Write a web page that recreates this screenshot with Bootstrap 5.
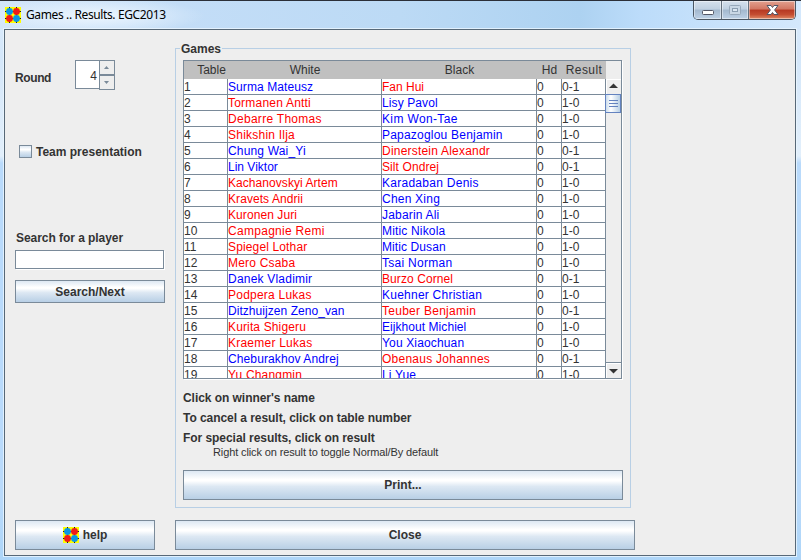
<!DOCTYPE html>
<html lang="en">
<head>
<meta charset="utf-8">
<title>Games .. Results. EGC2013</title>
<link rel="stylesheet" href="https://cdn.jsdelivr.net/npm/bootstrap@5.3.0/dist/css/bootstrap.min.css">
<style>
body{width:801px;height:560px;overflow:hidden;font:12px/16px "Liberation Sans",Arial,sans-serif;color:#333}
.win{width:801px;height:560px;padding:0 5px 4px 4px;border-top:1px solid #2b2f38;background:linear-gradient(#dcecfc 0,#d4e7fa 55px,#e2effb 155px,#b9dafb 162px,#b9dafb 500px,#add5f8 100%)}
.titlebar{height:28px;margin:0 -5px 0 -4px;padding-left:5px;background:radial-gradient(ellipse 110px 18px at 95px 15px,rgba(240,248,255,.9),rgba(240,248,255,0)),linear-gradient(90deg,#d3e6fa 0,#c3ddf7 180px,#bcdaf5 400px,#add2f1 580px,#bcdcfa 640px,#d4e8fc 801px)}
.caption{font:12px/16px "Noto Sans","Open Sans",sans-serif;letter-spacing:-.38px;color:#000;margin:6px 0 0 5px;white-space:nowrap}
.sys{height:19px;width:103px;margin-right:5px;border:1px solid #4b5663;border-top:0;border-radius:0 0 5px 5px;overflow:hidden}
.sys span{border-right:1px solid #65717e;background:linear-gradient(#d5e0ec 0,#c0d0e1 45%,#a3b8ce 50%,#bed1e6 100%);box-shadow:inset 0 0 0 1px rgba(255,255,255,.45)}
.sys .quit{border:0;background:linear-gradient(#e3a08f 0,#d27662 45%,#b63822 50%,#c44d31 75%,#e08b67 100%)}
.pane{height:527px;width:792px;border:1px solid #576877;background:#eee;box-shadow:0 0 0 1px rgba(235,246,255,.8)}
.side{width:170px;padding-left:10px;height:478px}
.spin{width:40px;height:30px;margin-left:24px}
.spin-val{width:25px;height:29px;border:1px solid #7a8a99;border-right:0;background:#fff;font-size:12px;padding:2px 2px 0 0}
.spin-btn{width:16px;height:15px;border:1px solid #7a8a99;background:#eee}
.tick{width:13px;height:13px;border:1px solid #7a8a99;margin-top:-1px}
.tick,.steel{background:linear-gradient(#dde8f3 0,#fff 30%,#fff 35%,#dde8f3 55%,#b8cfe5 100%)}
.steel{border:1px solid #7a8a99;border-radius:0;color:#333;font:bold 12px/16px "Liberation Sans",Arial,sans-serif;padding:0}
.steel:hover{color:#333;border-color:#7a8a99}
.field{width:149px;height:19px;border:1px solid #7a8a99;background:#fff;box-shadow:1px 1px 0 #fff}
.group{width:456px;height:460px;margin:18px 0 0;border:1px solid #b8cfe5;padding:0 7px}
.group-title{height:16px;margin:-8px 0 0 -3px;padding:0 1px;background:#eee;width:max-content;font-weight:bold}
.grid-box{width:439px;height:319px;margin-top:3px;border:1px solid #7a8a99;box-shadow:1px 1px 0 #fff;overflow:hidden}
.line{display:grid;grid-template-columns:44px 154px 155px 25px 44px;width:422px}
.heads{background:silver;height:18px;text-align:center;line-height:19px}
.line.item{height:16px;background:#fff}
.item span{border-right:1px solid #7a8a99;border-bottom:1px solid #7a8a99;line-height:16px;height:16px;white-space:nowrap}
.item .w{color:#00f}
.item .l{color:#f00}
.rows{height:299px;overflow:hidden}
.bar{width:15px;background:#eee}
.bar-wrap{border-left:1px solid #7a8a99;width:16px;height:299px}
.arrow{height:15px;box-shadow:inset 1px 1px 0 #fff}
.arrow.down{height:16px;border-top:1px solid #7a8a99}
.thumb{height:19px;border:1px solid #6382bf;margin-left:-1px;background:linear-gradient(90deg,#cbdcec,#fff 35%,#b8cfe5)}
.hint{font-weight:bold;height:20px;line-height:20px;white-space:nowrap;letter-spacing:-.05px}
.subhint{font-size:11px;line-height:12px;padding-left:30px;white-space:nowrap;letter-spacing:-.12px}
</style>
<script src="https://cdn.jsdelivr.net/npm/bootstrap@5.3.0/dist/js/bootstrap.bundle.min.js"></script>
</head>
<body>
<svg width="0" height="0" class="position-absolute"><defs><symbol id="stones" viewBox="0 0 16 16"><path fill="#ff0" d="M0 0h16v16H0z"/><path stroke="#222" d="M4.500 0v16M11.500 0v16M0 4.500h16M0 11.500h16"/><circle cx="4.500" cy="4.500" r="3.400" fill="#0a96e6"/><circle cx="11.500" cy="4.500" r="3.400" fill="#f01a1a"/><circle cx="4.500" cy="11.500" r="3.400" fill="#f01a1a"/><circle cx="11.500" cy="11.500" r="3.400" fill="#0a96e6"/></symbol></defs></svg>
<div class="win">
  <header class="titlebar d-flex">
    <svg width="16" height="16" style="margin-top:6px"><use href="#stones"/></svg>
    <div class="caption">Games .. Results. EGC2013</div>
    <div class="sys d-flex ms-auto">
      <span style="width:28px"><svg class="d-block" width="27" height="18"><rect x="8.500" y="9.500" width="11" height="4" rx="1" fill="#fff" stroke="#535666"/></svg></span>
      <span style="width:27px"><svg class="d-block" width="26" height="18"><rect x="7.500" y="4.500" width="11" height="9" rx="1" fill="#c9d7e5" stroke="#98a9bb"/><rect x="10.500" y="7.500" width="5" height="3" fill="#dce7f2" stroke="#8b9eb1"/></svg></span>
      <span class="quit" style="width:46px"><svg class="d-block" width="46" height="18"><path d="M18 4.500h4l1.500 2 1.500-2h4l-3.400 4.500 3.400 4.500h-4l-1.500-2-1.500 2h-4l3.400-4.500z" fill="#fff" stroke="#535666"/></svg></span>
    </div>
  </header>
  <main class="pane">
    <div class="d-flex">
      <section class="side">
        <div class="d-flex align-items-start" style="margin-top:30px">
          <b style="margin-top:10px;width:36px;letter-spacing:-.4px">Round</b>
          <div class="spin d-flex">
            <div class="spin-val d-flex align-items-center justify-content-end"><span>4</span></div>
            <div><div class="spin-btn"><svg class="d-block" width="14" height="13"><path d="M4 8h5L6.500 5z" fill="#7a8a99"/></svg></div><div class="spin-btn"><svg class="d-block" width="14" height="13"><path d="M4 5h5L6.500 8z" fill="#7a8a99"/></svg></div></div>
          </div>
        </div>
        <div class="d-flex align-items-center" style="margin:54px 0 0 4px"><span class="tick"></span><b class="ms-1 text-nowrap">Team presentation</b></div>
        <div style="margin:70px 0 0 1px;letter-spacing:-.05px"><b>Search for a player</b></div>
        <div class="field" style="margin-top:4px"></div>
        <button class="btn steel d-block" style="width:150px;height:23px;margin-top:11px">Search/Next</button>
      </section>
      <section class="group">
        <div class="group-title">Games</div>
        <div class="grid-box">
          <div class="line heads"><span style="padding-left:11px">Table</span><span>White</span><span>Black</span><span>Hd</span><span style="letter-spacing:.4px">Result</span></div>
          <div class="d-flex">
            <div class="rows" id="rows"></div>
            <div class="bar-wrap"><div class="bar d-flex flex-column h-100">
              <div class="arrow"><svg class="d-block" width="14" height="15"><path d="M3 9h9L7.500 4.500z" fill="#333"/></svg></div>
              <div class="thumb"><svg class="d-block" width="14" height="17"><path d="M3 5.500h9M3 8.500h9M3 11.500h9" stroke="#6382bf"/></svg></div>
              <div class="arrow down mt-auto"><svg class="d-block" width="14" height="15"><path d="M3 6h9L7.500 10.500z" fill="#333"/></svg></div>
            </div></div>
          </div>
        </div>
        <div style="margin-top:9px">
          <div class="hint">Click on winner's name</div>
          <div class="hint">To cancel a result, click on table number</div>
          <div class="hint" style="height:18px">For special results, click on result</div>
          <div class="subhint">Right click on result to toggle Normal/By default</div>
        </div>
        <button class="btn steel d-block" style="width:440px;height:30px;margin-top:12px">Print...</button>
      </section>
    </div>
    <footer class="d-flex" style="margin:12px 0 0 10px;gap:20px">
      <button class="btn steel d-flex align-items-center justify-content-center gap-1" style="width:140px;height:30px"><svg width="16" height="16"><use href="#stones"/></svg>help</button>
      <button class="btn steel" style="width:460px;height:30px">Close</button>
    </footer>
  </main>
</div>
<script>
// white, black, white won, extra tracking in px for each name
const games=[["Surma Mateusz","Fan Hui",0,1,0],["Tormanen Antti","Lisy Pavol",1,3,1],["Debarre Thomas","Kim Won-Tae",1,4,4],["Shikshin Ilja","Papazoglou Benjamin",1,3,4],["Chung Wai_Yi","Dinerstein Alexandr",0,2,4],["Lin Viktor","Silt Ondrej",0,0,1],["Kachanovskyi Artem","Karadaban Denis",1,1,4],["Kravets Andrii","Chen Xing",1,1,2],["Kuronen Juri","Jabarin Ali",1,1,2],["Campagnie Remi","Mitic Nikola",1,4,2],["Spiegel Lothar","Mitic Dusan",1,2,1],["Mero Csaba","Tsai Norman",1,2,3],["Danek Vladimir","Burzo Cornel",0,3,1],["Podpera Lukas","Kuehner Christian",1,3,4],["Ditzhuijzen Zeno_van","Teuber Benjamin",0,1,4],["Kurita Shigeru","Eijkhout Michiel",1,2,1],["Kraemer Lukas","You Xiaochuan",1,3,2],["Cheburakhov Andrej","Obenaus Johannes",0,2,4],["Yu Changmin","Li Yue",1,2,1]];
const cell=(name,cls,extra)=>`<span class="${cls}" style="letter-spacing:${(extra/name.length).toFixed(2)}px">${name}</span>`;
document.getElementById("rows").innerHTML=games.map(([a,b,r,x,y],i)=>`<div class="line item"><span>${i+1}</span>${cell(a,r?"l":"w",x)}${cell(b,r?"w":"l",y)}<span>0</span><span>${r?"1-0":"0-1"}</span></div>`).join("");
</script>
</body>
</html>
